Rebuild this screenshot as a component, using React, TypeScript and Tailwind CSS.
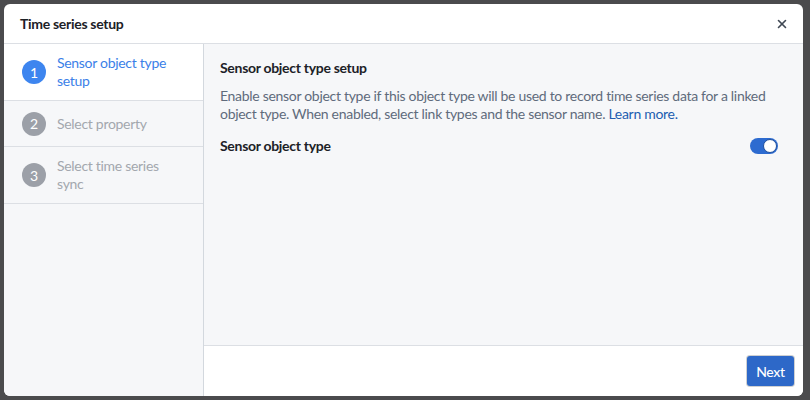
import { X } from 'lucide-react';

const steps = [
  { n: 1, lines: ['Sensor object type', 'setup'], active: true },
  { n: 2, lines: ['Select property'], active: false },
  { n: 3, lines: ['Select time series', 'sync'], active: false },
];

function StepItem({ n, lines, active }: { n: number; lines: string[]; active: boolean }) {
  return (
    <div
      className={
        'flex items-center gap-[11px] pl-[18px] pr-3 py-[10px] min-h-[46px] border-b border-[#dcdfe4] ' +
        (active ? 'bg-white' : 'bg-[#f6f7f9]')
      }
    >
      <div
        className={
          'w-6 h-6 shrink-0 rounded-full flex items-center justify-center text-[14px] text-white ' +
          (active ? 'bg-[#3d85ef]' : 'bg-[#9ca0a8]')
        }
      >
        {n}
      </div>
      <div className={'text-[14px] leading-[18px] ' + (active ? 'text-[#3b7fe8]' : 'text-[#a3a7ae]')}>
        {lines.map((l) => (
          <div key={l}>{l}</div>
        ))}
      </div>
    </div>
  );
}

function Toggle({ on }: { on: boolean }) {
  return (
    <div
      className={
        'w-[28px] h-[16px] rounded-full flex items-center px-[1px] ' +
        (on ? 'bg-[#2d6bd0] justify-end' : 'bg-[#c5cbd3] justify-start')
      }
    >
      <div className="w-[14px] h-[14px] rounded-full bg-white border border-[#1f4f9c]" />
    </div>
  );
}

export default function App() {
  return (
    <div
      className="w-[810px] h-[400px] bg-[#4b4b4d] p-[4px] overflow-hidden tracking-[-0.3px]"
      style={{ fontFamily: 'Lato, "Noto Sans", sans-serif' }}
    >
      <div className="w-[799px] h-[392px] bg-white rounded-[6px] overflow-hidden flex flex-col">
        <div className="h-[40px] shrink-0 flex items-center justify-between pl-4 pr-[14px] border-b border-[#dcdfe4]">
          <span className="text-[14px] font-bold text-[#1c2127]">Time series setup</span>
          <X size={14} strokeWidth={2.75} className="text-[#404854]" />
        </div>
        <div className="flex flex-1 min-h-0">
          <div className="w-[200px] shrink-0 bg-[#f6f7f9] border-r border-[#d3d8de]">
            {steps.map((s) => (
              <StepItem key={s.n} n={s.n} lines={s.lines} active={s.active} />
            ))}
          </div>
          <div className="flex-1 flex flex-col">
            <div className="flex-1 bg-[#f6f7f9] px-4 pt-[15px]">
              <h2 className="text-[14px] leading-[18px] font-bold text-[#1c2127]">Sensor object type setup</h2>
              <p className="mt-[10px] text-[14px] leading-[18px] text-[#5f6b7c]">
                <span className="whitespace-nowrap">
                  Enable sensor object type if this object type will be used to record time series data for a linked
                </span>
                <br />
                object type. When enabled, select link types and the sensor name.{' '}
                <a className="text-[#215db0]">Learn more.</a>
              </p>
              <div className="mt-[14px] flex items-center justify-between pr-[9px]">
                <span className="text-[14px] leading-[18px] font-bold text-[#1c2127]">Sensor object type</span>
                <Toggle on />
              </div>
            </div>
            <div className="h-[51px] shrink-0 bg-white border-t border-[#dcdfe4] flex items-center justify-end pr-[9px]">
              <button className="w-[47px] h-[30px] rounded-[3px] bg-[#2d68c8] text-white text-[14px] font-medium shadow-[0_0_0_1px_rgba(17,20,24,0.2)]">
                Next
              </button>
            </div>
          </div>
        </div>
      </div>
    </div>
  );
}
